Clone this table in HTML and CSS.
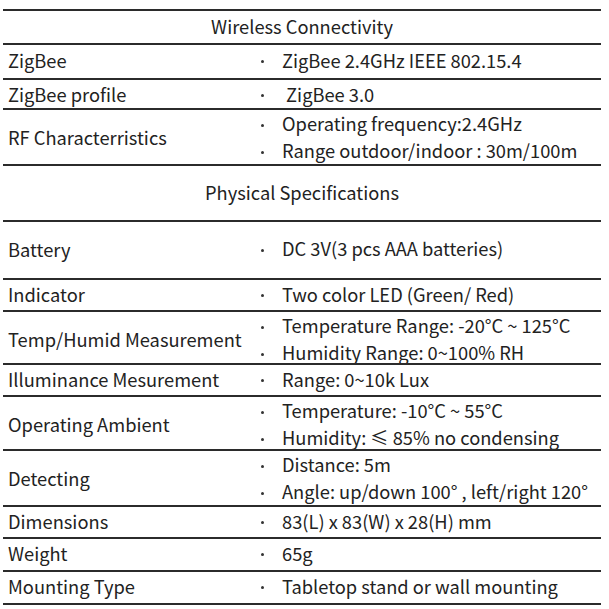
FILE: index.html
```html
<!DOCTYPE html>
<html lang="en">
<head>
<meta charset="utf-8">
<title>Specifications</title>
<link rel="stylesheet" href="styles.css">
</head>
<body>
<div class="spec">
  <div class="row head h34">Wireless Connectivity</div>
  <div class="row h35"><div class="key">ZigBee</div><ul class="val"><li>ZigBee 2.4GHz IEEE 802.15.4</li></ul></div>
  <div class="row h30"><div class="key">ZigBee profile</div><ul class="val"><li>&nbsp;ZigBee 3.0</li></ul></div>
  <div class="row h56"><div class="key">RF Characterristics</div><ul class="val"><li>Operating frequency:2.4GHz</li><li>Range outdoor/indoor : 30m/100m</li></ul></div>
  <div class="row head h56">Physical Specifications</div>
  <div class="row h58"><div class="key">Battery</div><ul class="val"><li>DC 3V(3 pcs AAA batteries)</li></ul></div>
  <div class="row h32"><div class="key">Indicator</div><ul class="val"><li>Two color LED (Green/ Red)</li></ul></div>
  <div class="row h53"><div class="key">Temp/Humid Measurement</div><ul class="val"><li>Temperature Range: -20°C ~ 125°C</li><li>Humidity Range: 0~100% RH</li></ul></div>
  <div class="row h32"><div class="key">Illuminance Mesurement</div><ul class="val"><li>Range: 0~10k Lux</li></ul></div>
  <div class="row h54"><div class="key">Operating Ambient</div><ul class="val"><li>Temperature: -10°C ~ 55°C</li><li>Humidity: <span class="cjk">≤</span> 85% no condensing</li></ul></div>
  <div class="row h56"><div class="key">Detecting</div><ul class="val"><li>Distance: 5m</li><li>Angle: up/down 100° , left/right 120°</li></ul></div>
  <div class="row h32"><div class="key">Dimensions</div><ul class="val"><li>83(L) x 83(W) x 28(H) mm</li></ul></div>
  <div class="row h33"><div class="key">Weight</div><ul class="val"><li>65g</li></ul></div>
  <div class="row h33 last"><div class="key">Mounting Type</div><ul class="val"><li>Tabletop stand or wall mounting</li></ul></div>
</div>
</body>
</html>
```
FILE: styles.css
```css
html, body {
  margin: 0;
  padding: 0;
  background: #fff;
}
body {
  padding: 9px 0 0 3px;
  font-family: "Noto Sans CJK SC", "Noto Sans", "DejaVu Sans", sans-serif;
  font-size: 18.3px;
  color: #222;
}
.spec {
  width: 598px;
  display: flex;
  flex-direction: column;
}
.row {
  box-sizing: border-box;
  border-top: 2px solid #2b2b2b;
  padding-bottom: 3px;
  display: grid;
  grid-template-columns: 252px 1fr;
  align-items: center;
}
.row.last {
  border-bottom: 2px solid #2b2b2b;
}
.row.head {
  display: flex;
  justify-content: center;
  align-items: center;
}
.h30 { height: 30px; }
.h32 { height: 32px; }
.h33 { height: 33px; }
.h34 { height: 34px; }
.h35 { height: 35px; }
.h53 { height: 53px; }
.h54 { height: 54px; }
.h56 { height: 56px; }
.h58 { height: 58px; }
.row.last.h33 { height: 35px; }
.key {
  padding-left: 5px;
  line-height: 28px;
  white-space: nowrap;
}
.val {
  list-style: none;
  margin: 0;
  padding: 0;
}
.val li {
  display: flex;
  align-items: center;
  line-height: 27px;
  white-space: pre;
}
.val li::before {
  content: "";
  flex: none;
  width: 3px;
  height: 3px;
  border-radius: 50%;
  background: #333;
  margin: 3px 18px 0 6px;
}
.cjk {
  font-family: "Noto Sans CJK SC", sans-serif;
}
```
